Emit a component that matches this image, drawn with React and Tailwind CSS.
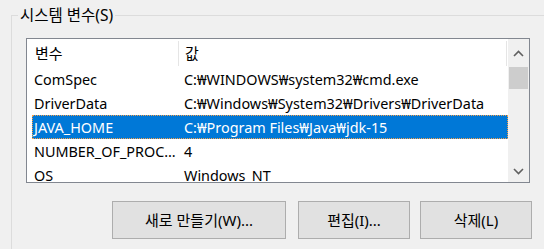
const rows = [
  { name: 'ComSpec', value: 'C:₩WINDOWS₩system32₩cmd.exe' },
  { name: 'DriverData', value: 'C:₩Windows₩System32₩Drivers₩DriverData' },
  { name: 'JAVA_HOME', value: 'C:₩Program Files₩Java₩jdk-15', selected: true },
  { name: 'NUMBER_OF_PROC…', value: '4' },
  { name: 'OS', value: 'Windows_NT' },
];

const Chevron = ({ up }) => (
  <svg width="11" height="7" viewBox="0 0 11 7">
    <path
      d={up ? 'M1 6 L5.5 1.5 L10 6' : 'M1 1 L5.5 5.5 L10 1'}
      fill="none"
      stroke="#606060"
      strokeWidth="1.6"
    />
  </svg>
);

export default function App() {
  return (
    <div
      className="w-[544px] h-[249px] bg-[#f0f0f0] overflow-hidden relative text-[15px] text-black"
      style={{ fontFamily: '"Noto Sans", "Noto Sans CJK KR", sans-serif' }}
    >
      {/* group box */}
      <div className="absolute left-[11px] top-[15px] w-[560px] h-[260px] border-l border-t border-[#dcdcdc]" />
      <div className="absolute left-[18px] top-[4px] px-[2px] bg-[#f0f0f0] leading-[22px] text-[15.5px]">시스템 변수(S)</div>

      <div className="pt-[38px] pl-[26px]">
        <div className="w-[504px] h-[145px] border border-[#828790] bg-white flex overflow-hidden text-[14.4px]">
          <div className="flex-1 flex flex-col">
            <div className="h-[28px] flex items-center relative">
              <div className="w-[151px] pl-[8px] leading-[28px] text-[15px]">변수</div>
              <div className="w-[1px] h-[25px] bg-[#e5e5e5]" />
              <div className="flex-1 pl-[6px] leading-[28px] text-[15px]">값</div>
              <div className="w-[1px] h-[25px] bg-[#e5e5e5] mr-[1px]" />
            </div>
            {rows.map((r) => (
              <div
                key={r.name}
                className={
                  r.selected
                    ? 'ml-[5px] h-[24px] shrink-0 flex items-center bg-[#0078d7] text-white outline outline-1 outline-dotted outline-offset-[-1px] outline-[#f5a04a]'
                    : 'ml-[5px] h-[24px] shrink-0 flex items-center'
                }
              >
                <div className="w-[145px] pl-[2px] whitespace-nowrap overflow-hidden leading-[25px]">{r.name}</div>
                <div className="flex-1 pl-[7px] whitespace-nowrap overflow-hidden leading-[25px]">{r.value}</div>
              </div>
            ))}
          </div>
          <div className="w-[21px] bg-[#f0f0f0] flex flex-col items-center">
            <div className="h-[28px] w-full flex items-center justify-center">
              <Chevron up />
            </div>
            <div className="w-[19px] h-[22px] bg-[#cdcdcd]" />
            <div className="flex-1" />
            <div className="h-[22px] w-full flex items-center justify-center">
              <Chevron />
            </div>
          </div>
        </div>
      </div>

      <div className="flex pl-[112px] pt-[18px] gap-[12px]">
        <button className="w-[174px] h-[38px] bg-[#e1e1e1] border border-[#adadad] flex items-center justify-center">
          새로 만들기(W)...
        </button>
        <div className="flex gap-[10px]">
          <button className="w-[112px] h-[38px] bg-[#e1e1e1] border border-[#adadad] flex items-center justify-center">
            편집(I)...
          </button>
          <button className="w-[112px] h-[38px] bg-[#e1e1e1] border border-[#adadad] flex items-center justify-center">
            삭제(L)
          </button>
        </div>
      </div>
    </div>
  );
}
